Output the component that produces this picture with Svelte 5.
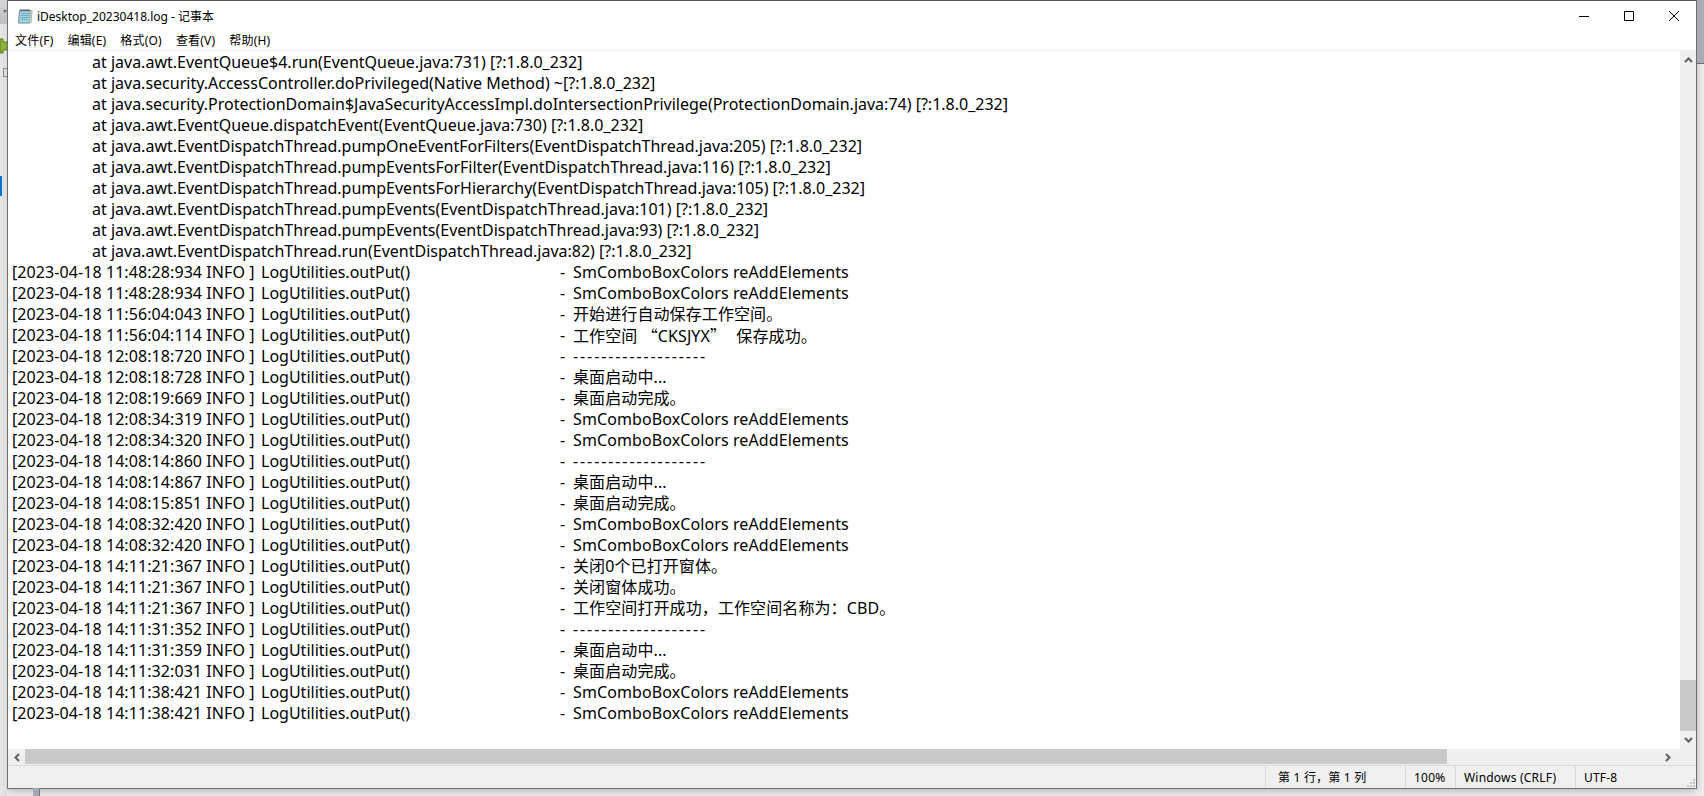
<script lang="ts">
  const trace = [
    'at java.awt.EventQueue$4.run(EventQueue.java:731) [?:1.8.0_232]',
    'at java.security.AccessController.doPrivileged(Native Method) ~[?:1.8.0_232]',
    'at java.security.ProtectionDomain$JavaSecurityAccessImpl.doIntersectionPrivilege(ProtectionDomain.java:74) [?:1.8.0_232]',
    'at java.awt.EventQueue.dispatchEvent(EventQueue.java:730) [?:1.8.0_232]',
    'at java.awt.EventDispatchThread.pumpOneEventForFilters(EventDispatchThread.java:205) [?:1.8.0_232]',
    'at java.awt.EventDispatchThread.pumpEventsForFilter(EventDispatchThread.java:116) [?:1.8.0_232]',
    'at java.awt.EventDispatchThread.pumpEventsForHierarchy(EventDispatchThread.java:105) [?:1.8.0_232]',
    'at java.awt.EventDispatchThread.pumpEvents(EventDispatchThread.java:101) [?:1.8.0_232]',
    'at java.awt.EventDispatchThread.pumpEvents(EventDispatchThread.java:93) [?:1.8.0_232]',
    'at java.awt.EventDispatchThread.run(EventDispatchThread.java:82) [?:1.8.0_232]'
  ];

  const combo = 'SmComboBoxColors reAddElements';
  const rule = '-------------------';
  const logs = [
    ['2023-04-18 11:48:28:934', combo],
    ['2023-04-18 11:48:28:934', combo],
    ['2023-04-18 11:56:04:043', '开始进行自动保存工作空间。'],
    ['2023-04-18 11:56:04:114', '工作空间 “CKSJYX” 保存成功。'],
    ['2023-04-18 12:08:18:720', rule],
    ['2023-04-18 12:08:18:728', '桌面启动中...'],
    ['2023-04-18 12:08:19:669', '桌面启动完成。'],
    ['2023-04-18 12:08:34:319', combo],
    ['2023-04-18 12:08:34:320', combo],
    ['2023-04-18 14:08:14:860', rule],
    ['2023-04-18 14:08:14:867', '桌面启动中...'],
    ['2023-04-18 14:08:15:851', '桌面启动完成。'],
    ['2023-04-18 14:08:32:420', combo],
    ['2023-04-18 14:08:32:420', combo],
    ['2023-04-18 14:11:21:367', '关闭0个已打开窗体。'],
    ['2023-04-18 14:11:21:367', '关闭窗体成功。'],
    ['2023-04-18 14:11:21:367', '工作空间打开成功，工作空间名称为：CBD。'],
    ['2023-04-18 14:11:31:352', rule],
    ['2023-04-18 14:11:31:359', '桌面启动中...'],
    ['2023-04-18 14:11:32:031', '桌面启动完成。'],
    ['2023-04-18 14:11:38:421', combo],
    ['2023-04-18 14:11:38:421', combo]
  ];

  const menus = ['文件(F)', '编辑(E)', '格式(O)', '查看(V)', '帮助(H)'];
</script>

<div class="desktop">
  <div class="left-strip">
    <span class="strip-top"></span>
    <svg class="peek-arrow" viewBox="0 0 4 3" width="4" height="3" aria-hidden="true"><path d="M0 0h4L2 3z" fill="#6a6a6a" /></svg>
    <svg class="peek" viewBox="0 0 7 20" width="7" height="20" aria-hidden="true">
      <path d="M0 3h3v3h4v8H3v3H0z" fill="#8cb33c" stroke="#5d7a22" />
    </svg>
    <span class="peek-box"></span>
    <span class="accent"></span>
  </div>

  <div class="window">
    <header class="titlebar">
      <svg class="app-icon" viewBox="0 0 16 16" width="16" height="16" aria-hidden="true">
        <path d="M2.500 2.500h11l-1 12.500h-11z" fill="#a5d5e2" stroke="#6d8f9c" />
        <path d="M12.500 15l1-12.500h1.500l-1 12.500z" fill="#e4efe9" stroke="#a5b5aa" />
        <path d="M4 5.500h8M3.800 7.500h8M3.600 9.500h8M3.400 11.500h8" stroke="#6ea9bd" />
        <path d="M4 1v2.500M6 1v2.500M8 1v2.500M10 1v2.500M12 1v2.500" stroke="#4f5560" />
      </svg>
      <span class="title">iDesktop_20230418.log - 记事本</span>
      <div class="controls">
        <svg viewBox="0 0 10 10" width="10" height="10" aria-hidden="true"><path d="M0 5.500h10" stroke="#000" /></svg>
        <svg viewBox="0 0 10 10" width="10" height="10" aria-hidden="true"><path d="M.5.500h9v9h-9z" fill="none" stroke="#000" /></svg>
        <svg viewBox="0 0 10 10" width="10" height="10" aria-hidden="true"><path d="M0 0l10 10M10 0L0 10" stroke="#000" /></svg>
      </div>
    </header>

    <nav class="menubar">
      {#each menus as m}
        <span>{m}</span>
      {/each}
    </nav>

    <div class="editor">
      <div class="text">
        {#each trace as t}
          <div class="line indent">{t}</div>
        {/each}
        {#each logs as [time, msg]}
          <div class="line">
            <span class="stamp">[{time} INFO ]</span><span class="fn">LogUtilities.outPut()</span><span class="dash">-</span><span class="msg" class:rule={msg === rule}>{#each msg.split(/([“”])/) as part}{#if part === '“' || part === '”'}<span class="quote" class:close={part === '”'}>{part}</span>{:else}{part}{/if}{/each}</span>
          </div>
        {/each}
      </div>
      <div class="vscroll">
        <svg viewBox="0 0 9 6" width="9" height="6" aria-hidden="true"><path d="M1 5l3.500-3.500L8 5" fill="none" stroke="#606060" stroke-width="2" /></svg>
        <div class="vtrack"><div class="vthumb"></div></div>
        <svg viewBox="0 0 9 6" width="9" height="6" aria-hidden="true"><path d="M1 1l3.500 3.500L8 1" fill="none" stroke="#606060" stroke-width="2" /></svg>
      </div>
      <div class="hscroll">
        <svg viewBox="0 0 6 9" width="6" height="9" aria-hidden="true"><path d="M5 1L1.500 4.500 5 8" fill="none" stroke="#606060" stroke-width="2" /></svg>
        <div class="hthumb"></div>
        <svg class="next" viewBox="0 0 6 9" width="6" height="9" aria-hidden="true"><path d="M1 1l3.500 3.500L1 8" fill="none" stroke="#606060" stroke-width="2" /></svg>
      </div>
    </div>

    <footer class="statusbar">
      <span class="cell pos">第 1 行，第 1 列</span>
      <span class="cell zoom">100%</span>
      <span class="cell eol">Windows (CRLF)</span>
      <span class="cell enc">UTF-8</span>
      <svg class="grip" viewBox="0 0 9 9" width="9" height="9" aria-hidden="true">
        <path d="M7 1h2v2H7zM4 4h2v2H4zM7 4h2v2H7zM1 7h2v2H1zM4 7h2v2H4zM7 7h2v2H7z" fill="#c4c4c4" />
      </svg>
    </footer>
  </div>

  <div class="right-strip"></div>
  <span class="under-bar"></span>
</div>

<style>
  :global(body) {
    background: #efefef;
    overflow: hidden;
  }

  .desktop {
    height: 796px;
    display: flex;
    position: relative;
  }

  .left-strip {
    width: 7px;
    flex: none;
    position: relative;
    background: linear-gradient(90deg, #e6e6e6, #dcdcdc);
  }

  .strip-top {
    position: absolute;
    top: 0;
    left: 0;
    width: 7px;
    height: 24px;
    background: linear-gradient(180deg, #d6d6d6, #bcbcc2);
  }

  .peek-arrow {
    position: absolute;
    top: 10px;
    left: 3px;
  }

  .peek {
    position: absolute;
    top: 36px;
    left: 0;
  }

  .peek-box {
    position: absolute;
    top: 68px;
    left: 3px;
    width: 4px;
    height: 9px;
    border: 1px solid #8a8a8a;
    border-right: 0;
    box-sizing: border-box;
  }

  .accent {
    position: absolute;
    top: 176px;
    left: 0;
    width: 2px;
    height: 20px;
    background: #0a74d6;
  }

  .right-strip {
    width: 7px;
    flex: none;
    height: 64px;
    background: #a9abb2;
    border-bottom: 1px solid #6a6a6a;
    box-sizing: border-box;
  }

  .under-bar {
    position: absolute;
    left: 33px;
    top: 788px;
    width: 6px;
    height: 8px;
    background: #a4a8b4;
    border-right: 1px solid #777;
  }

  .window {
    width: 1690px;
    height: 789px;
    flex: none;
    display: flex;
    flex-direction: column;
    background: #fff;
    border: 1px solid #6e6e6e;
    border-top-color: #5a5a5a;
    box-sizing: border-box;
    box-shadow: 0 2px 8px rgb(0 0 0 / 0.25);
    font-family: 'Noto Sans', 'Noto Sans CJK SC', sans-serif;
    color: #000;
  }

  .titlebar {
    height: 29px;
    display: flex;
    align-items: center;
    padding-left: 9px;
    font-size: 12px;
  }

  .app-icon {
    margin-right: 4px;
  }

  .controls {
    margin-left: auto;
    display: flex;
    align-items: center;
    gap: 35px;
    padding-right: 17px;
  }

  .menubar {
    height: 20px;
    display: flex;
    gap: 14px;
    align-items: center;
    padding-left: 7px;
    font-size: 12px;
    letter-spacing: 0.2px;
    border-bottom: 1px solid #f0f0f0;
  }

  .editor {
    flex: 1;
    display: grid;
    grid-template-columns: 1fr 16px;
    grid-template-rows: 1fr 16px;
    min-height: 0;
  }

  .text {
    padding: 1px 0 0 4px;
    font-size: 16px;
    line-height: 21px;
    overflow: hidden;
    min-width: 0;
  }

  .line {
    display: flex;
    height: 21px;
    white-space: pre;
  }

  .indent {
    padding-left: 80px;
  }

  .stamp {
    width: 249px;
    flex: none;
    letter-spacing: 0.08px;
  }

  .fn {
    width: 299px;
    flex: none;
  }

  .dash {
    width: 13px;
    flex: none;
  }

  .msg {
    letter-spacing: 0.1px;
  }

  .msg.rule {
    letter-spacing: 1.9px;
  }

  .quote {
    font-family: 'Noto Sans CJK SC', sans-serif;
  }

  .quote.close {
    margin-right: 6px;
  }

  .vscroll {
    background: #efefef;
    display: flex;
    flex-direction: column;
    align-items: center;
  }

  .vscroll svg {
    margin: 6px 0;
    flex: none;
  }

  .vtrack {
    flex: 1;
    display: flex;
    flex-direction: column;
    justify-content: flex-end;
    align-self: stretch;
  }

  .vthumb {
    height: 51px;
    background: #c9c9c9;
  }

  .hscroll {
    grid-column: 1 / 3;
    height: 16px;
    background: #efefef;
    display: flex;
    align-items: center;
  }

  .hscroll svg {
    margin: 0 5px 0 6px;
    flex: none;
  }

  .hscroll .next {
    margin: 0;
    margin-left: 218px;
  }

  .hthumb {
    width: 1422px;
    height: 15px;
    align-self: flex-start;
    background: #c9c9c9;
  }

  .statusbar {
    height: 22px;
    flex: none;
    display: flex;
    align-items: center;
    background: #f0f0f0;
    border-top: 1px solid #d9d9d9;
    font-size: 12px;
    letter-spacing: 0.2px;
    position: relative;
  }

  .cell {
    height: 100%;
    display: flex;
    align-items: center;
    border-left: 1px solid #d9d9d9;
    box-sizing: border-box;
    padding-left: 8px;
  }

  .pos {
    margin-left: 1257px;
    width: 140px;
    padding-left: 12px;
  }

  .zoom {
    width: 50px;
  }

  .eol {
    width: 120px;
  }

  .enc {
    flex: 1;
  }

  .grip {
    position: absolute;
    right: 1px;
    bottom: 1px;
  }
</style>
